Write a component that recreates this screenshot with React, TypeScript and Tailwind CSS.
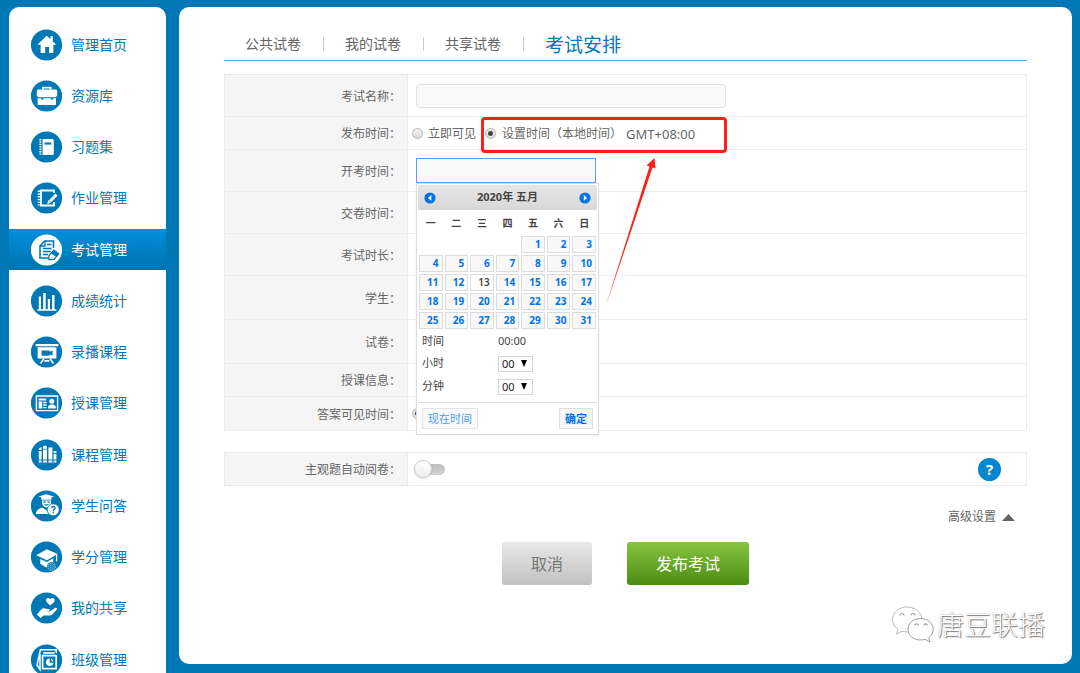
import type { ReactNode } from 'react';

const BLUE = '#0078b6';

type NavEntry = { label: string; icon: ReactNode; active?: boolean };

const navEntries: NavEntry[] = [
  {
    label: '管理首页',
    icon: (
      <path
        fill="#fff"
        d="M15.6 6.8 6.4 15.8h3.2V24h4.6v-6h3.9v6h4.3v-8.2h3l-3.6-3.4V6.9h-2.3v3.2z"
      />
    ),
  },
  {
    label: '资源库',
    icon: (
      <g fill="#fff">
        <path d="M11 9.5V6.8h9.6v2.7h-1.8V8.4h-6v1.1z" />
        <path d="M7 9.5h18l1.2 1v5.5l-1.8 1.2H7.4L5.8 16v-5.5z" />
        <path d="M6.6 18.2h3.2l1.4 2 1.4-2h7l1.4 2 1.4-2h2.6V25H6.6z" />
      </g>
    ),
  },
  {
    label: '习题集',
    icon: (
      <g>
        <path fill="#fff" d="M11.6 8h10l1.2 1.4v13.8l-1 .8H11.6z" />
        <path d="M9.4 8v16" stroke="#fff" strokeWidth="2" strokeDasharray="1.4 1" />
        <path fill={BLUE} d="M13.6 11.4h6.6v2.2h-6.6z" />
      </g>
    ),
  },
  {
    label: '作业管理',
    icon: (
      <g fill="none" stroke="#fff">
        <path d="M23 11V8.5H10v15h13V20" strokeWidth="1.8" />
        <path d="M8 8.5v15" strokeWidth="2.6" strokeDasharray="1.4 1.4" />
        <path d="M25.5 12.6 19 19.2" strokeWidth="3" />
        <path fill="#fff" stroke="none" d="m17.2 18 2.9 2.8-3.8 1.2z" />
      </g>
    ),
  },
  {
    label: '考试管理',
    active: true,
    icon: (
      <g fill="none" stroke={BLUE}>
        <path d="M22.5 14V7h-9L9 12v12h9" strokeWidth="1.6" />
        <path d="M14 7v5H9M15.8 10.5h4.6M12 14.5h8.5M12 17.5h8M12 20.5h5" strokeWidth="1.3" />
        <path fill="#fff" strokeWidth="1.2" d="m17.8 22 5-6 5 3.8-4.8 5.6-5 .3z" />
        <path fill={BLUE} stroke="none" d="m20 19.2 2.8-3.2 5 3.8-2.6 3.2z" />
      </g>
    ),
  },
  {
    label: '成绩统计',
    icon: (
      <path
        fill="#fff"
        d="M6.4 24.2h19v1.5h-19zM7.8 11.5H10V24.300H7.800zM12.2 8h2.500v16.300h-2.500zM16.800 14H19v10.300h-2.200zM21.100 10h2.400v14.300h-2.400z"
      />
    ),
  },
  {
    label: '录播课程',
    icon: (
      <g>
        <path fill="#fff" d="M4.6 8h22.8v2.2H4.6zM6.6 11.2h18.8v11.4H6.6z" />
        <path fill={BLUE} d="M10.6 14.400h8v1.400l3-1.200v5l-3-1.200v1.400h-8z" />
        <path d="m13 22.5-3.4 5m9.4-5 3.4 5m-9-2.600h5" stroke="#fff" strokeWidth="1.600" />
      </g>
    ),
  },
  {
    label: '授课管理',
    icon: (
      <g>
        <path fill="none" stroke="#fff" strokeWidth="1.4" d="M5.4 9h21.2v14.6H5.4z" />
        <path fill="#fff" d="M7.6 11.6h7.6v2H7.6zM7.6 14.6h3.6v6.8H7.6zM12.2 14.8h3.4v1.4h-3.4zM12.2 17.3h3.4v1.4h-3.4zM12.2 19.9h3.4v1.4h-3.4z" />
        <circle cx="20.8" cy="14.2" r="2.5" fill="#fff" />
        <path fill="#fff" d="M17 21.4v-2.2l2.4-1.6h3l2.4 1.6v2.2z" />
      </g>
    ),
  },
  {
    label: '课程管理',
    icon: (
      <g fill="#fff">
        <path d="M7.8 9.4 10.6 8v3H7.8zM7.8 12h2.8v8.6H7.8zM7.8 21.5h2.8v1.9H7.8z" />
        <path d="M12 7.6 14.2 6.4 16 7.6v2.2h-4zM12 10.6h4v9.8h-4zM12 21.4h4v2h-4z" />
        <path d="M17.4 8.6h4v11.8h-4zM17.4 21.4h4v2h-4z" />
        <path d="M22.6 12h2.8v2h-2.8zM22.6 15h2.8v5.4h-2.8zM22.6 21.4h2.8v2h-2.8z" />
      </g>
    ),
  },
  {
    label: '学生问答',
    icon: (
      <g>
        <path fill="#fff" d="m7.6 6.4 7.6-2.2 7.8 2.2-2.6 1.2v2.2h-10V7.6z" />
        <path fill="#fff" d="M10.8 10.6h9.4c0 4.2-2 6.8-4.7 6.8s-4.7-2.6-4.7-6.8z" />
        <path fill={BLUE} d="M12.4 11.6h2.4v1.2h-2.4zM16.4 11.6h2.4v1.2h-2.4zM13 14.2h5l-1 1.4h-3z" />
        <path fill="#fff" d="M4.8 24c.4-4 3-5.6 7-6.2l3.8 2.8 3.4-2.6V24z" />
        <circle cx="22.2" cy="19.8" r="6" fill="#fff" stroke={BLUE} strokeWidth=".8" />
        <path fill="none" stroke={BLUE} strokeWidth="1.4" d="M20.6 18.2c.2-2.4 3.6-2.2 3.4 0-.1 1.1-1.7 1.3-1.7 2.8m0 .8v1.4" />
      </g>
    ),
  },
  {
    label: '学分管理',
    icon: (
      <g>
        <path fill="#fff" d="m5.2 14.2 10.6-6 10.8 4.8-10.6 6.2z" />
        <path fill="#fff" d="M9.2 18v4.8l6 3.8 2-2.4 5-1.6v-5.4L16 21z" />
        <path d="M25.6 13.4v7" stroke="#fff" strokeWidth="1.3" />
        <circle cx="20.6" cy="25.6" r="4.6" fill={BLUE} />
        <circle cx="20.6" cy="25.6" r="3.6" fill="none" stroke="#8cc3e0" strokeWidth="1.3" strokeDasharray="1.3 .8" />
        <circle cx="20.6" cy="25.6" r="1.6" fill="none" stroke="#8cc3e0" strokeWidth=".8" />
      </g>
    ),
  },
  {
    label: '我的共享',
    icon: (
      <g fill="#fff">
        <path d="M19.3 13.4c-2.4-1.9-4.3-3.3-4.3-5.3 0-2.5 3.2-2.9 4.3-.8 1.1-2.1 4.4-1.7 4.4.8 0 2-2 3.4-4.4 5.3z" />
        <path d="m5.800 22.400 4.600-5.200c1.200-1.200 2.400-1 3.600-.6l4 .6c1 .2 1 1.600 0 1.800l-3.400.5h4.200l5.200-3.400c1.400-.8 2.600.2 1.800 1.400l-4.600 5c-.8.8-1.800 1-3 1h-5.600l-3 2.400z" />
      </g>
    ),
  },
  {
    label: '班级管理',
    icon: (
      <g fill="none" stroke="#fff">
        <path d="M25.200 9V5.800H9.400L6 21l3 4.600V10" strokeWidth="1.500" />
        <path fill="#fff" stroke="none" d="M12.200 8.200h11.400v1.600H12.200z" />
        <path d="M11.600 11.600h13.600v13H11.600z" strokeWidth="1.700" />
        <path fill="#fff" stroke="none" d="M18.600 14.400a3.800 3.800 0 1 0 3.900 4.400h-3.900z" />
        <path d="M20 15.400a3 3 0 0 1 2 2" strokeWidth="1.300" />
      </g>
    ),
  },
];

const weekdays = ['一', '二', '三', '四', '五', '六', '日'];
const weeks: (number | null)[][] = [
  [null, null, null, null, 1, 2, 3],
  [4, 5, 6, 7, 8, 9, 10],
  [11, 12, 13, 14, 15, 16, 17],
  [18, 19, 20, 21, 22, 23, 24],
  [25, 26, 27, 28, 29, 30, 31],
];

function Sidebar() {
  return (
    <nav className="w-[157px] shrink-0 rounded-t-[10px] bg-white pt-[17px]">
      <ul className="flex min-h-[656px] flex-col justify-between">
        {navEntries.map((entry) => (
          <li key={entry.label}>
            <a
              href="#"
              className={
                entry.active
                  ? 'flex h-[41px] items-center gap-2 bg-linear-to-b from-[#008fdc] to-[#0073b0] pl-[22px] text-sm text-white'
                  : 'flex h-[41px] items-center gap-2 pl-[22px] text-sm text-[#0078b6]'
              }
            >
              <svg viewBox="0 0 32 32" className="size-8 shrink-0" aria-hidden="true">
                <circle cx="15.5" cy="16" r="15.6" fill={entry.active ? '#fff' : BLUE} />
                {entry.icon}
              </svg>
              {entry.label}
            </a>
          </li>
        ))}
      </ul>
    </nav>
  );
}

function Tabs() {
  return (
    <div className="flex h-[34px] items-center border-b border-[#5bafd7] text-sm text-[#666]">
      {['公共试卷', '我的试卷', '共享试卷'].map((tab) => (
        <a key={tab} href="#" className="flex h-[14px] items-center border-r border-[#ccc] pr-[22px] pl-[21px] leading-[14px]">
          {tab}
        </a>
      ))}
      <a href="#" className="px-[21px] pt-[2px] text-[19px] leading-6 text-[#0078b6]">
        考试安排
      </a>
    </div>
  );
}

function Row({ label, height, htmlFor, children }: { label: string; height: string; htmlFor?: string; children?: ReactNode }) {
  return (
    <div className={`flex border-b border-[#ececec] ${height}`}>
      <label
        htmlFor={htmlFor}
        className="flex w-[183px] shrink-0 items-center justify-end border-r border-[#ececec] bg-[#f5f5f5] pt-[2px] pr-[6px]"
      >
        {label}
      </label>
      <div className="flex flex-1 items-center pl-2">{children}</div>
    </div>
  );
}

function Radio({ id, name, checked }: { id: string; name: string; checked?: boolean }) {
  return (
    <input
      id={id}
      type="radio"
      name={name}
      defaultChecked={checked}
      className="size-[11px] shrink-0 appearance-none rounded-full border border-[#b5b5b5] bg-linear-to-b from-[#f3f3f3] to-[#d8d8d8] checked:bg-[radial-gradient(circle,#444_0_2px,#e4e4e4_3px)]"
    />
  );
}

function MonthArrow({ label, points }: { label: string; points: string }) {
  return (
    <button type="button" aria-label={label} className="size-3">
      <svg viewBox="0 0 12 12" className="size-3">
        <circle cx="6" cy="6" r="5.6" fill="#0073ea" />
        <polygon points={points} fill="#fff" />
      </svg>
    </button>
  );
}

function TimeSelect({ id, label }: { id: string; label: string }) {
  return (
    <div className="flex h-[23px] items-center">
      <label htmlFor={id} className="w-[76px]">
        {label}
      </label>
      <div className="relative">
        <select id={id} className="block h-4 w-[35px] appearance-none border border-[#d5d5d5] bg-white pl-[3px] text-[11px] leading-[14px] text-[#222]">
          <option>00</option>
        </select>
        <svg viewBox="0 0 6 7" className="pointer-events-none absolute top-1 right-[6px] h-[7px] w-[6px]">
          <path d="M0 0h6L3 7z" fill="#000" />
        </svg>
      </div>
    </div>
  );
}

function DatePicker() {
  return (
    <div className="absolute top-[25px] left-0 z-10 w-[183px] border border-[#ddd] bg-white p-px text-[11px] text-[#444] shadow-xs">
      <div className="flex h-[25px] items-center justify-between rounded-xs bg-linear-to-b from-[#e6e6e6] to-[#d8d8d8] px-[6px] font-bold">
        <MonthArrow label="上个月" points="7.4,3 7.4,9 4,6" />
        <span>2020年 五月</span>
        <MonthArrow label="下个月" points="4.8,3 4.8,9 8.2,6" />
      </div>
      <table className="w-full table-fixed border-collapse">
        <thead>
          <tr className="h-[25px]">
            {weekdays.map((day) => (
              <th key={day} className="p-0 text-[10px] leading-3 font-bold">
                {day}
              </th>
            ))}
          </tr>
        </thead>
        <tbody>
          {weeks.map((week, index) => (
            <tr key={index}>
              {week.map((day, column) => (
                <td key={column} className="p-px">
                  {day && (
                    <button
                      type="button"
                      className={
                        day === 13
                          ? 'block h-[17px] w-full border border-[#ddd] bg-white pr-[3px] text-right text-[10px] leading-[15px] font-semibold text-[#444]'
                          : 'block h-[17px] w-full border border-[#ddd] bg-[#f8f8f8] pr-[3px] text-right text-[10px] leading-[15px] font-bold text-[#0073ea]'
                      }
                    >
                      {day}
                    </button>
                  )}
                </td>
              ))}
            </tr>
          ))}
        </tbody>
      </table>
      <div className="px-1">
        <div className="flex h-[22px] items-center">
          <span className="w-[76px]">时间</span>
          <span>00:00</span>
        </div>
        <TimeSelect id="hour" label="小时" />
        <TimeSelect id="minute" label="分钟" />
      </div>
      <div className="mt-1 flex justify-between border-t border-[#ddd] px-1 pt-[5px] pb-1">
        <button type="button" className="h-[21px] border border-[#e3e3e3] bg-[#fafafa] px-[5px] leading-[19px] text-[#4b9cf0]">
          现在时间
        </button>
        <button type="button" className="h-[21px] border border-[#ddd] bg-[#f8f8f8] px-[5px] leading-[19px] font-bold text-[#0073ea]">
          确定
        </button>
      </div>
    </div>
  );
}

function ExamForm() {
  return (
    <form className="text-xs text-[#666]">
      <div className="mt-[13px] border-x border-t border-[#ececec]">
        <Row label="考试名称：" height="h-[42px]" htmlFor="name">
          <input id="name" type="text" className="h-6 w-[310px] rounded-sm border border-[#e2e2e2] bg-[#fafafa] px-2" />
        </Row>
        <Row label="发布时间：" height="h-[33px]">
          <div className="-ml-1 flex items-center gap-[5px]">
            <Radio id="now" name="publish" />
            <label htmlFor="now" className="pt-[2px]">
              立即可见
            </label>
          </div>
          <div className="relative ml-[9px] flex items-center gap-[6px]">
            <Radio id="later" name="publish" checked />
            <label htmlFor="later" className="flex items-center gap-1 pt-[2px]">
              设置时间（本地时间）
              <span className="text-[13px] leading-4">GMT+08:00</span>
            </label>
            <div className="pointer-events-none absolute -top-[7px] -left-[4px] h-9 w-[246px] rounded-sm border-3 border-[#fd2016]" />
            <svg viewBox="0 0 60 160" className="pointer-events-none absolute top-8 left-[115px] z-20 h-[160px] w-[60px]">
              <path d="M5.500 151 49.500 10.500 46.500 9.500 54.500 2 55.500 12.500 52.500 11.500z" fill="#fd2016" />
            </svg>
          </div>
        </Row>
        <Row label="开考时间：" height="h-[42px]" htmlFor="start">
          <div className="relative">
            <input id="start" type="text" className="block h-[25px] w-[180px] border border-[#5c9cf5] bg-[#fafafa] px-2" />
            <DatePicker />
          </div>
        </Row>
        <Row label="交卷时间：" height="h-[42px]" />
        <Row label="考试时长：" height="h-[42px]" />
        <Row label="学生：" height="h-[44px]" />
        <Row label="试卷：" height="h-[44px]" />
        <Row label="授课信息：" height="h-[33px]" />
        <Row label="答案可见时间：" height="h-[34px]" htmlFor="answer">
          <div className="-ml-1 flex">
            <Radio id="answer" name="answer" checked />
          </div>
        </Row>
      </div>

      <div className="mt-[21px] border-x border-t border-[#ececec]">
        <Row label="主观题自动阅卷：" height="h-[33px]" htmlFor="auto">
          <div className="relative -ml-[2px] h-[18px] w-[31px]">
            <input
              id="auto"
              type="checkbox"
              className="mt-1 block h-[11px] w-full appearance-none rounded-full bg-linear-to-b from-[#bdbdbd] to-[#d2d2d2]"
            />
            <span className="pointer-events-none absolute top-0 left-0 size-[18px] rounded-full border border-[#ccc] bg-linear-to-b from-white to-[#eee] shadow-sm" />
          </div>
          <button
            type="button"
            aria-label="帮助"
            className="mr-[25px] ml-auto size-[23px] rounded-full bg-[#0087cf] text-[15px] leading-[23px] font-bold text-white"
          >
            ?
          </button>
        </Row>
      </div>

      <div className="mt-[21px] flex justify-end pr-3">
        <button type="button" className="flex items-center gap-[6px] leading-5">
          高级设置
          <svg viewBox="0 0 13 7" className="h-[7px] w-[13px]">
            <path d="M6.500 0 13 7H0z" fill="#666" />
          </svg>
        </button>
      </div>

      <div className="mt-[15px] flex justify-center gap-[35px] text-base">
        <button type="button" className="h-[43px] rounded-[3px] bg-linear-to-b from-[#e8e8e8] to-[#c2c2c2] px-[29px] text-[#777]">
          取消
        </button>
        <button type="button" className="h-[43px] rounded-[3px] bg-linear-to-b from-[#87c540] to-[#4d8c12] px-[29px] text-white">
          发布考试
        </button>
      </div>
    </form>
  );
}

function Watermark() {
  return (
    <div className="absolute right-[27px] bottom-[19px] flex items-center gap-[2px]">
      <svg viewBox="0 0 44 40" className="h-10 w-11" fill="#fff" stroke="#a0a0a0" strokeWidth="1">
        <path d="M16 2C8 2 1.500 7.500 1.500 14.500c0 4 2 7.300 5.300 9.600L5.500 29l5.600-2.800c1.800.5 3.600.7 5.400.7C24 26.500 31 21.500 31 14.500 31 7.500 24 2 16 2z" stroke="#bbb" />
        <path d="M29.500 13.500c-7 0-12.500 4.700-12.500 10.800C17 30.500 22.500 35 29.500 35c1.600 0 3.100-.2 4.500-.7l5 2.700-1.300-4.300c2.800-2 4.500-5 4.500-8.400 0-6.100-5.700-10.800-12.700-10.800z" />
        <path fill="none" strokeWidth="1.200" d="M9 10.500a2 2 0 0 1 4 0M20 10.500a2 2 0 0 1 4 0M24 20.500a1.700 1.700 0 0 1 3.400 0M33 20.500a1.700 1.700 0 0 1 3.400 0" />
      </svg>
      <span className="text-[27px] leading-9 font-light text-white [text-shadow:1px_1px_1px_#777,0_0_1px_#999]">唐豆联播</span>
    </div>
  );
}

export default function App() {
  return (
    <div
      lang="zh-CN"
      className="flex h-screen gap-[13px] overflow-hidden bg-[#0078b6] pt-[7px] pr-2 pl-[9px] font-['Noto_Sans','Noto_Sans_CJK_SC',sans-serif]"
    >
      <Sidebar />
      <main className="relative mb-[9px] flex-1 rounded-[10px] bg-white px-[45px] pt-5">
        <Tabs />
        <ExamForm />
        <Watermark />
      </main>
    </div>
  );
}
